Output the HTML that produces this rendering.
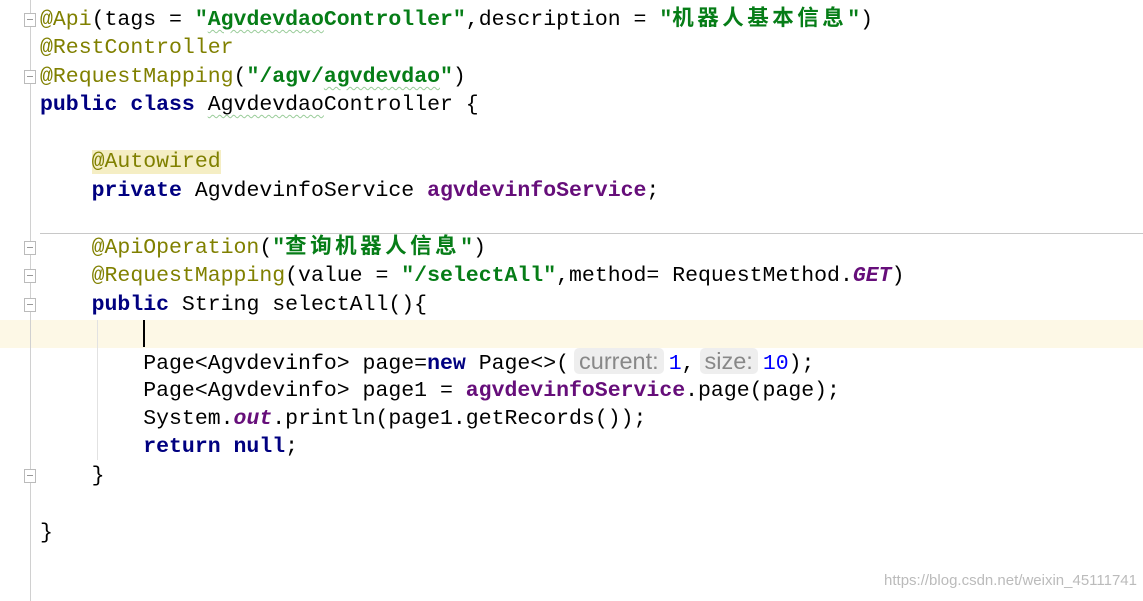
<!DOCTYPE html>
<html><head><meta charset="utf-8"><style>
body{margin:0;width:1143px;height:601px;background:#fff;position:relative;overflow:hidden;font-family:"Liberation Mono","Noto Sans CJK SC",monospace;font-size:21.5px;color:#000}
.gut{position:absolute;left:30px;top:0;width:1px;height:601px;background:#d0d0d0}
.ln{position:absolute;left:40px;height:28.6px;line-height:28.6px;white-space:pre}
.an{color:#808000}.s{color:#067d17;font-weight:bold}.k{color:#000080;font-weight:bold}
.f{color:#660e7a;font-weight:bold}.n{color:#0000ff}.i{font-style:italic}
.c{letter-spacing:3.5px}
.h{font-family:"Liberation Sans",sans-serif;font-size:23.5px;line-height:26px;display:inline-block;color:#888;background:#eeeeee;border-radius:5px;padding:0 5px;margin:0 5px}
.w{text-decoration:underline wavy #9c9;text-decoration-thickness:1px;text-underline-offset:4px}
.fold{position:absolute;left:24px;width:10px;height:12px;border:1px solid #bbb;background:#fff}
.fold:after{content:"";position:absolute;left:2px;top:5px;width:6px;height:1px;background:#999}
</style></head><body>
<div style="position:absolute;left:0;top:320px;width:1143px;height:28px;background:#fdf8e6"></div>
<div style="position:absolute;left:40px;top:233px;width:1103px;height:1px;background:#c8c8c8"></div>
<div class="gut"></div>
<div style="position:absolute;left:97px;top:320px;width:1px;height:140px;background:#e2e2e2"></div>
<div style="position:absolute;left:143px;top:320px;width:2px;height:27px;background:#000"></div>
<div class="fold" style="top:13px"></div><div class="fold" style="top:70px"></div>
<div class="fold" style="top:241px"></div><div class="fold" style="top:269px"></div><div class="fold" style="top:298px"></div><div class="fold" style="top:469px"></div>
<div class="ln" style="top:6px"><span class="an">@Api</span>(tags = <span class="s">"<span class="w">Agvdevdao</span>Controller"</span>,description = <span class="s">"<span class="c">机器人基本信息</span>"</span>)</div>
<div class="ln" style="top:34px"><span class="an">@RestController</span></div>
<div class="ln" style="top:63px"><span class="an">@RequestMapping</span>(<span class="s">"/agv/<span class="w">agvdevdao</span>"</span>)</div>
<div class="ln" style="top:91px"><span class="k">public class</span> <span class="w">Agvdevdao</span>Controller {</div>
<div class="ln" style="top:148px">    <span class="an" style="background:#f5eec4">@Autowired</span></div>
<div class="ln" style="top:177px">    <span class="k">private</span> AgvdevinfoService <span class="f">agvdevinfoService</span>;</div>
<div class="ln" style="top:234px">    <span class="an">@ApiOperation</span>(<span class="s">"<span class="c">查询机器人信息</span>"</span>)</div>
<div class="ln" style="top:262px">    <span class="an">@RequestMapping</span>(value = <span class="s">"/selectAll"</span>,method= RequestMethod.<span class="f i">GET</span>)</div>
<div class="ln" style="top:291px">    <span class="k">public</span> String selectAll(){</div>
<div class="ln" style="top:348px">        Page&lt;Agvdevinfo&gt; page=<span class="k">new</span> Page&lt;&gt;(<span class="h">current:</span><span class="n">1</span>,<span class="h">size:</span><span class="n">10</span>);</div>
<div class="ln" style="top:377px">        Page&lt;Agvdevinfo&gt; page1 = <span class="f">agvdevinfoService</span>.page(page);</div>
<div class="ln" style="top:405px">        System.<span class="f i">out</span>.println(page1.getRecords());</div>
<div class="ln" style="top:433px">        <span class="k">return null</span>;</div>
<div class="ln" style="top:462px">    }</div>
<div class="ln" style="top:519px">}</div>
<div style="position:absolute;right:6px;top:572px;font-family:'Liberation Sans',sans-serif;font-size:15px;color:#bbb">https://blog.csdn.net/weixin_45111741</div>
</body></html>
